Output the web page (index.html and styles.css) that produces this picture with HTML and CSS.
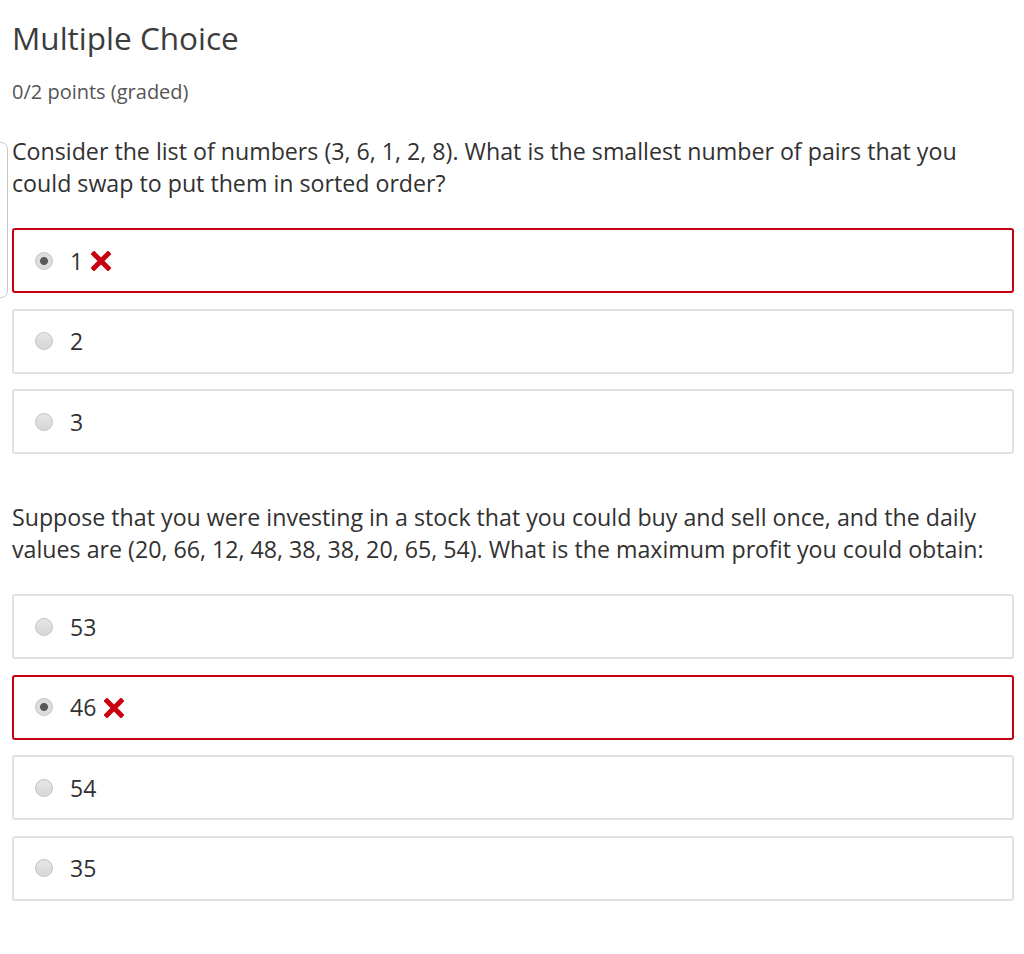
FILE: index.html
```html
<!DOCTYPE html>
<html>
<head>
<meta charset="utf-8">
<link rel="stylesheet" href="styles.css">
</head>
<body>
<div class="page">
  <div class="edge"></div>
  <h2 class="title">Multiple Choice</h2>
  <div class="points">0/2 points (graded)</div>

  <div class="question q1">Consider the list of numbers (3, 6, 1, 2, 8). What is the smallest number of pairs that you could swap to put them in sorted order?</div>
  <div class="choices">
    <label class="choice wrong"><span class="radio checked"></span><span class="val">1</span><svg class="xmark" viewBox="0 0 20 20" width="20" height="20"><path d="M3 3 L17 17 M17 3 L3 17" stroke="#c8000f" stroke-width="5" stroke-linecap="square" fill="none"/></svg></label>
    <label class="choice"><span class="radio"></span><span class="val">2</span></label>
    <label class="choice"><span class="radio"></span><span class="val">3</span></label>
  </div>

  <div class="question q2">Suppose that you were investing in a stock that you could buy and sell once, and the daily values are (20, 66, 12, 48, 38, 38, 20, 65, 54). What is the maximum profit you could obtain:</div>
  <div class="choices">
    <label class="choice"><span class="radio"></span><span class="val">53</span></label>
    <label class="choice wrong"><span class="radio checked"></span><span class="val">46</span><svg class="xmark" viewBox="0 0 20 20" width="20" height="20"><path d="M3 3 L17 17 M17 3 L3 17" stroke="#c8000f" stroke-width="5" stroke-linecap="square" fill="none"/></svg></label>
    <label class="choice"><span class="radio"></span><span class="val">54</span></label>
    <label class="choice"><span class="radio"></span><span class="val">35</span></label>
  </div>
</div>
</body>
</html>
```
FILE: styles.css
```css
html, body {
  margin: 0;
  padding: 0;
  background: #fff;
}
body {
  font-family: "Open Sans", "Noto Sans", sans-serif;
  color: #313131;
}
.page {
  position: relative;
  padding: 20px 10px 0 12px;
}
.edge {
  position: absolute;
  left: -20px;
  top: 142px;
  width: 26px;
  height: 154px;
  border: 1px solid #c8c8c8;
  border-radius: 7px;
}
.title {
  margin: 0;
  font-size: 31.5px;
  line-height: 36px;
  font-weight: 400;
  color: #3c3c3c;
}
.points {
  margin-top: 24px;
  font-size: 20px;
  line-height: 24px;
  color: #555;
}
.question {
  font-size: 23.2px;
  line-height: 32px;
  color: #313131;
  padding-right: 30px;
}
.q1 { margin-top: 31px; }
.q2 { margin-top: 47px; }
.choices {
  margin-top: 29px;
  display: flex;
  flex-direction: column;
  gap: 15.5px;
}
.choice {
  box-sizing: border-box;
  height: 65px;
  border: 2px solid #e1e1e1;
  border-radius: 3px;
  display: flex;
  align-items: center;
  padding-left: 21px;
  font-size: 23px;
  color: #313131;
}
.choice.wrong {
  border-color: #c8000f;
}
.radio {
  box-sizing: border-box;
  width: 18px;
  height: 18px;
  border-radius: 50%;
  border: 1px solid #c4c4c4;
  background: linear-gradient(#e6e6e6, #d6d6d6);
  margin-right: 17px;
}
.radio.checked {
  background: radial-gradient(circle, #5a5a5a 0 3.6px, #dcdcdc 4.4px);
}
.val {
  line-height: 30px;
}
.xmark {
  margin-left: 8px;
  margin-top: 1px;
}
```
